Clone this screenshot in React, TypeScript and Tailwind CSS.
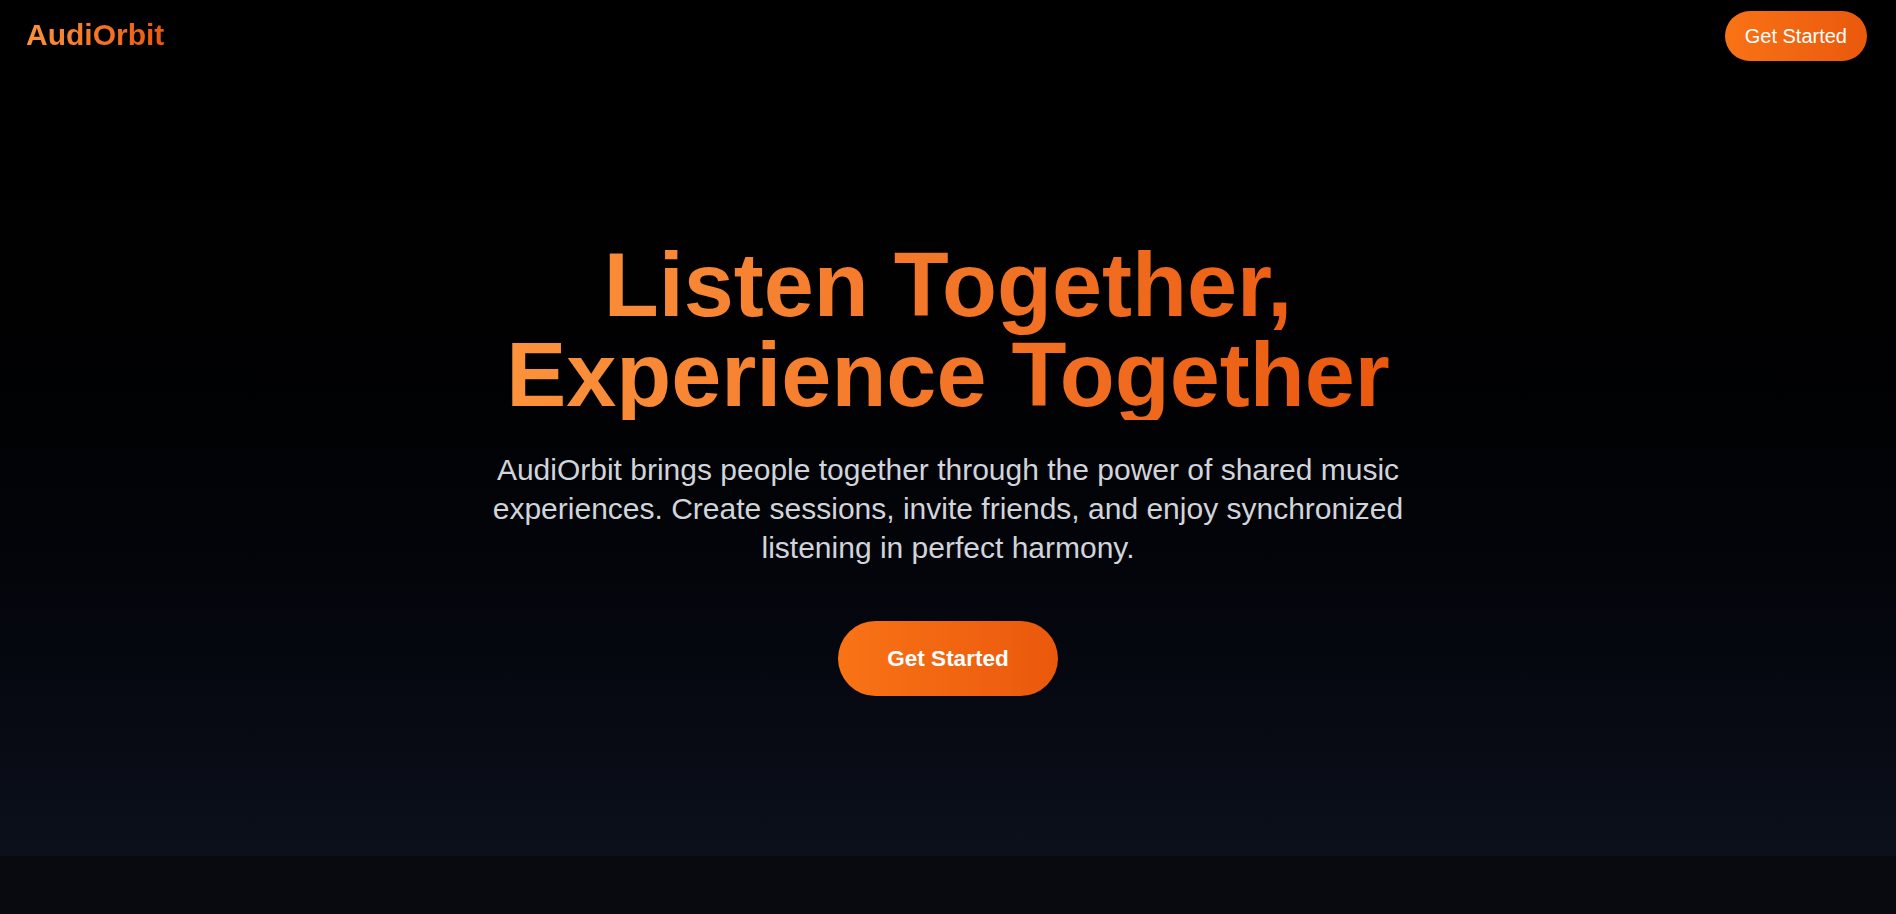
import React from "react";

const NavBar: React.FC = () => {
  return (
    <nav className="flex items-start justify-between h-[72px] pl-[26px] pr-[29px] pt-[11px]">
      <a
        href="#"
        className="mt-[9px] text-3xl leading-[30px] font-bold bg-linear-to-r from-[#fb923c] to-[#ea580c] bg-clip-text text-transparent"
      >
        AudiOrbit
      </a>
      <button className="rounded-full bg-linear-to-r from-[#f97316] to-[#ea580c] px-5 py-[11px] text-xl leading-7 text-white">
        Get Started
      </button>
    </nav>
  );
};

const Hero: React.FC = () => {
  return (
    <div className="flex flex-col items-center text-center pt-[168px]">
      <h1 className="text-[90px] leading-[90px] font-bold bg-linear-to-r from-[#fb923c] to-[#ea580c] bg-clip-text text-transparent">
        Listen Together,
        <br />
        Experience Together
      </h1>
      <p className="mt-[30px] max-w-5xl text-3xl leading-[39px] text-[#d1d5db]">
        AudiOrbit brings people together through the power of shared music
        experiences. Create sessions, invite friends, and enjoy synchronized
        listening in perfect harmony.
      </p>
      <button className="mt-[54px] flex h-[75px] items-center rounded-full bg-linear-to-r from-[#f97316] to-[#ea580c] px-[49px] text-[22.5px] font-bold text-white">
        Get Started
      </button>
    </div>
  );
};

export default function App() {
  return (
    <div
      className="min-h-screen bg-[#080a10]"
      style={{ fontFamily: '"Liberation Sans", Arial, sans-serif' }}
    >
      <section className="h-[856px] bg-linear-to-b from-black to-[#0c101b]">
        <NavBar />
        <Hero />
      </section>
    </div>
  );
}
